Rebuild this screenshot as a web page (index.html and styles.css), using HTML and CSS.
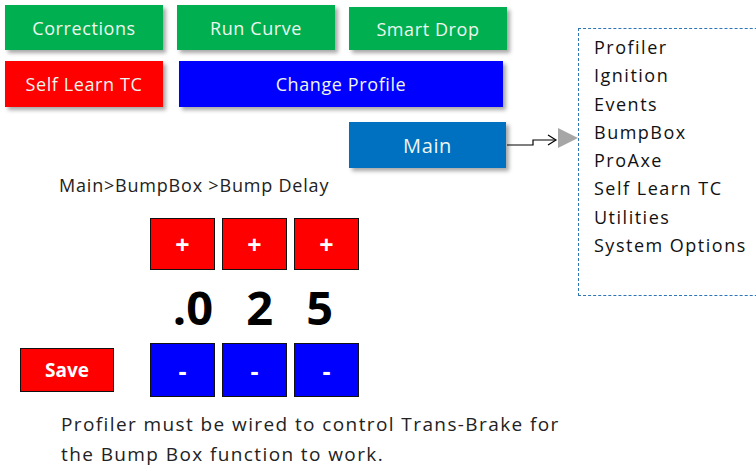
FILE: index.html
```
<!DOCTYPE html>
<html lang="en">
<head>
  <meta charset="UTF-8" />
  <title>Bump Delay</title>
  <link rel="stylesheet" href="styles.css">
</head>
<body>
  <div class="page">
    <div class="top">
      <div class="btn green">Corrections</div>
      <div class="btn green">Run Curve</div>
      <div class="btn green smart">Smart Drop</div>
      <div class="btn red">Self Learn TC</div>
      <div class="btn blue wide">Change Profile</div>
    </div>

    <div class="main-row">
      <div class="btn main">Main</div>
    </div>

    <div class="crumb">Main&gt;BumpBox &gt;Bump Delay</div>

    <div class="pad">
      <div class="key plus">+</div>
      <div class="key plus">+</div>
      <div class="key plus">+</div>
      <div class="digits">.0 2 5</div>
      <div class="key minus">-</div>
      <div class="key minus">-</div>
      <div class="key minus">-</div>
    </div>
    <div class="save">Save</div>

    <p class="note">Profiler must be wired to control Trans-Brake for<br>the Bump Box function to work.</p>

    <svg class="arrow" width="75" height="30" viewBox="0 0 75 30">
      <path d="M0 17 H26 V12 H48" fill="none" stroke="#000" stroke-width="1.2"/>
      <path d="M41 7 L49 12 L41 17" fill="none" stroke="#000" stroke-width="1.2"/>
      <polygon points="51,0 71,10 51,20" fill="#a6a6a6"/>
    </svg>

    <ul class="menu">
      <li>Profiler</li>
      <li>Ignition</li>
      <li>Events</li>
      <li>BumpBox</li>
      <li>ProAxe</li>
      <li>Self Learn TC</li>
      <li>Utilities</li>
      <li>System Options</li>
    </ul>
  </div>
</body>
</html>
```
FILE: styles.css
```
body { margin: 0; background: #fff; font-family: "Open Sans", "Liberation Sans", sans-serif; }
.page { position: relative; width: 756px; height: 471px; overflow: hidden; }

.top { display: grid; grid-template-columns: 158px 158px 158px; grid-template-rows: 45px 46px; column-gap: 14px; row-gap: 11px; padding: 5px 0 0 5px; }
.btn { display: flex; align-items: center; justify-content: center; color: #eef6ee; font-size: 18px; letter-spacing: 0.6px; box-shadow: 3px 3px 4px rgba(0,0,0,0.35); }
.green { background: #00b050; }
.smart { margin-top: 2px; }
.red { background: #ff0000; }
.blue { background: #0000ff; }
.wide { grid-column: span 2; margin-left: 2px; width: 324px; }

.main-row { padding: 15px 0 0 349px; }
.main { background: #0070c0; width: 157px; height: 46px; font-size: 20px; }

.crumb { margin: 7px 0 0 59px; font-size: 18px; line-height: 21px; letter-spacing: 0.8px; color: #222; }

.pad { display: grid; grid-template-columns: 65px 65px 65px; grid-template-rows: 52px 73px 54px; column-gap: 7px; margin: 22px 0 0 150px; width: 211px; }
.key { display: flex; align-items: center; justify-content: center; border: 1px solid #111; color: #fff; font-weight: bold; font-size: 25px; box-sizing: border-box; }
.plus { background: #ff0000; }
.minus { background: #0000ff; }
.digits { grid-column: span 3; display: flex; align-items: center; justify-content: center; padding-right: 3px; font-size: 47px; font-weight: bold; color: #000; word-spacing: 21px; }

.save { position: absolute; left: 20px; top: 348px; width: 94px; height: 44px; box-sizing: border-box; border: 1px solid #111; background: #ff0000; color: #fff; font-weight: bold; font-size: 19px; display: flex; align-items: center; justify-content: center; }

.note { margin: 12px 0 0 61px; font-size: 19px; line-height: 30px; letter-spacing: 1.4px; color: #222; }

.arrow { position: absolute; left: 507px; top: 128px; }

.menu { position: absolute; left: 578px; top: 28px; width: 200px; height: 268px; margin: 0; padding: 4px 0 0 15px; box-sizing: border-box; border: 1px dashed #2e75b6; list-style: none; font-size: 18px; line-height: 28.3px; letter-spacing: 1.5px; color: #111; }
```
